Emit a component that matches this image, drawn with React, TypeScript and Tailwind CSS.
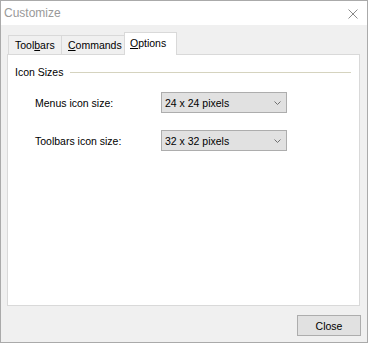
import React from "react";

function Combo({ value }: { value: string }) {
  return (
    <div className="w-[126px] h-[21px] border border-[#adadad] bg-[#e1e1e1] flex items-center justify-between pl-[3px] pr-[5px]">
      <span className="leading-[12px]">{value}</span>
      <svg width="7" height="4" viewBox="0 0 7 4" className="block">
        <polyline points="0.5,0.5 3.5,3.5 6.5,0.5" fill="none" stroke="#707070" strokeWidth="1" />
      </svg>
    </div>
  );
}

export default function App() {
  return (
    <div className="w-[368px] h-[343px] border border-[#aaaaaa] flex flex-col bg-[#f0f0f0] font-['Liberation_Sans',Arial,sans-serif] text-[10.5px] leading-[12px] text-black">
      <div className="h-[24px] shrink-0 bg-white flex items-center justify-between pl-[3px] pr-[9px]">
        <span className="text-[12px] leading-[14px] text-[#999999]">Customize</span>
        <svg width="10" height="10" viewBox="0 0 10 10" className="block mt-[1px]">
          <line x1="0.5" y1="0.5" x2="9.5" y2="9.5" stroke="#8a8a8a" strokeWidth="1" />
          <line x1="9.5" y1="0.5" x2="0.5" y2="9.5" stroke="#8a8a8a" strokeWidth="1" />
        </svg>
      </div>
      <div className="flex-1 flex flex-col px-[6px] pt-[7px]">
        <div className="flex items-end pl-[1px]">
          <div className="w-[54px] h-[19px] border-l border-t border-r border-[#d9d9d9] flex items-center pl-[6px]">
            <span>
              Tool<u>b</u>ars
            </span>
          </div>
          <div className="w-[62px] h-[19px] border-t border-[#d9d9d9] flex items-center pl-[6px]">
            <span>
              <u>C</u>ommands
            </span>
          </div>
          <div className="relative z-10 w-[53px] h-[23px] -mb-[1px] border-l border-t border-r border-[#d9d9d9] bg-white flex items-start pt-[4px] pl-[5px]">
            <span>
              <u>O</u>ptions
            </span>
          </div>
        </div>
        <div className="w-[353px] h-[252px] border border-[#d9d9d9] bg-white flex flex-col pl-[7px] pr-[8px] pt-[11px]">
          <div className="flex items-center gap-[7px]">
            <span>Icon Sizes</span>
            <div className="flex-1 h-px bg-[#d5d3bf]" />
          </div>
          <div className="flex flex-col gap-[17px] mt-[14px] ml-[20px]">
            <div className="flex items-center">
              <span className="w-[126px]">Menus icon size:</span>
              <Combo value="24 x 24 pixels" />
            </div>
            <div className="flex items-center">
              <span className="w-[126px]">Toolbars icon size:</span>
              <Combo value="32 x 32 pixels" />
            </div>
          </div>
        </div>
        <div className="flex justify-end pt-[9px]">
          <div className="w-[64px] h-[21px] border border-[#adadad] bg-[#e1e1e1] flex items-center justify-center">
            <span>Close</span>
          </div>
        </div>
      </div>
    </div>
  );
}
